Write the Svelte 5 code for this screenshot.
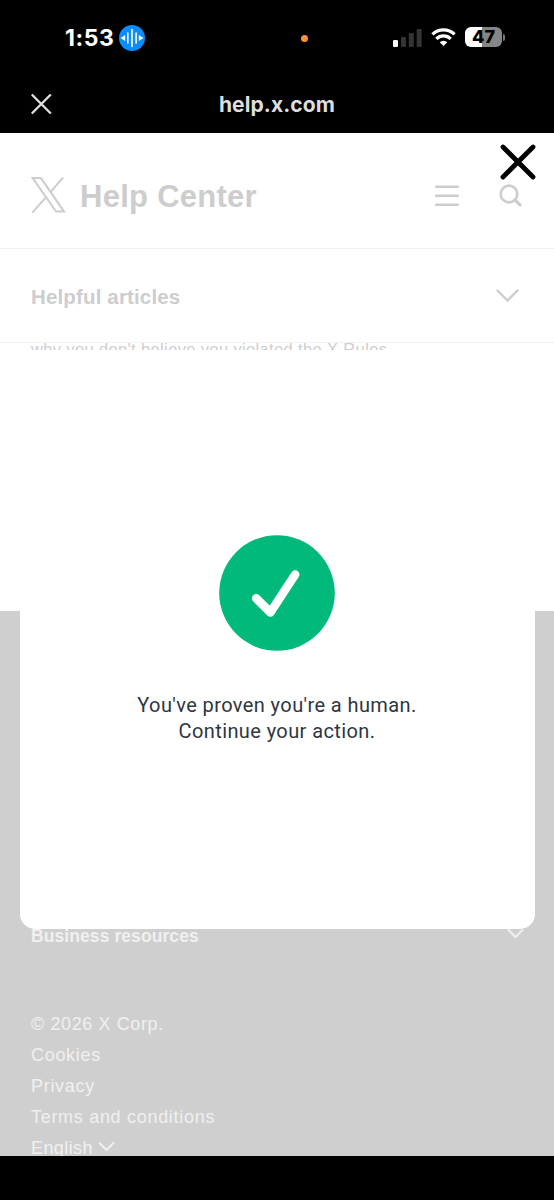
<script>
  const links = ['© 2026 X Corp.', 'Cookies', 'Privacy', 'Terms and conditions'];
</script>

<div class="phone">
  <div class="status">
    <span class="time">1:53</span>
    <svg class="voice" width="26" height="26" viewBox="0 0 26 26">
      <circle cx="13" cy="13" r="13" fill="#0a8cfb" />
      <path d="M1.5 13 6.2 10v6zM24.5 13 19.8 10v6z" fill="#fff" />
      <path d="M8.8 8v10M13 4.5v17M17.1 8v10" stroke="#fff" stroke-width="1.6" stroke-linecap="round" />
    </svg>
    <span class="dot"></span>
    <svg class="signal" width="29" height="18" viewBox="0 0 29 18">
      <rect x="0" y="11" width="5" height="7" rx="1.3" fill="#fff" />
      <rect x="8" y="8" width="5" height="10" rx="1.3" fill="#343434" />
      <rect x="15.8" y="4" width="5" height="14" rx="1.3" fill="#343434" />
      <rect x="23.7" y="0" width="5" height="18" rx="1.3" fill="#343434" />
    </svg>
    <svg class="wifi" width="25" height="18" viewBox="0 0 25 18">
      <g fill="none" stroke="#fff" stroke-width="3.2">
        <path d="M1.4 6.4a15.8 15.8 0 0 1 22.2 0" />
        <path d="M5.3 10.9a10.2 10.2 0 0 1 14.4 0" />
      </g>
      <path d="M12.5 18 8.7 14.2a5.4 5.4 0 0 1 7.6 0z" fill="#fff" />
    </svg>
    <span class="battery">47</span>
    <span class="cap"></span>
  </div>

  <div class="browser">
    <svg width="22" height="22" viewBox="0 0 22 22"><path d="M1.8 1.5l19 19M20.8 1.5l-19 19" stroke="#dedede" stroke-width="2.4" /></svg>
    <span class="host">help.x.com</span>
  </div>

  <main class="page">
    <header class="head">
      <svg class="logo" width="35" height="36" viewBox="0 0 35 36" fill="none" stroke="#cdcdcd">
        <path d="M1.7 1.1H10L33 34.6H25.1z" stroke-width="2" />
        <path d="M32.2.5 19.2 15.4M15.1 20.1 1.3 35.6" stroke-width="2" />
      </svg>
      <span class="title">Help Center</span>
      <svg class="menu" width="24" height="22" viewBox="0 0 24 22"><path d="M1.2 1.7h21.6M1.2 10.8h21.6M1.2 19.8h21.6" stroke="#cdcdcd" stroke-width="2.4" stroke-linecap="round" /></svg>
      <svg class="search" width="23" height="23" viewBox="0 0 23 23" fill="none" stroke="#cdcdcd"><circle cx="10" cy="10" r="8.3" stroke-width="2.7" /><path d="M16 16l5 4.9" stroke-width="3.2" stroke-linecap="round" /></svg>
    </header>
    <section class="articles">
      <span>Helpful articles</span>
      <svg width="23" height="14" viewBox="0 0 23 14"><path d="M1.5 1.5 11.5 11.5 21.5 1.5" fill="none" stroke="#cdcdcd" stroke-width="2.3" stroke-linecap="round" /></svg>
    </section>
    <p class="snippet"><span>why you don't believe you violated the X Rules</span></p>

    <footer class="foot">
      <div class="resources">
        <span>Business resources</span>
        <svg width="17" height="11" viewBox="0 0 17 11"><path d="M1 1.5 8.5 9 16 1.5" fill="none" stroke="#f0f0f0" stroke-width="2" /></svg>
      </div>
      <nav class="links">
        {#each links as l}<span>{l}</span>{/each}
        <span>English<svg class="lang" width="17" height="11" viewBox="0 0 17 11"><path d="M1 1.5 8.5 9 16 1.5" fill="none" stroke="#f0f0f0" stroke-width="2" /></svg></span>
      </nav>
    </footer>

    <div class="modal">
      <svg class="check" width="116" height="116" viewBox="0 0 116 116">
        <circle cx="58" cy="58" r="57.8" fill="#02b97c" />
        <path d="M37.2 63.3 51.4 77.4 76.2 39.5" fill="none" stroke="#fff" stroke-width="8.6" stroke-linecap="round" stroke-linejoin="round" />
      </svg>
      <p class="msg"><span>You've proven you're a human.</span><span>Continue your action.</span></p>
    </div>
    <svg class="close" width="36" height="36" viewBox="0 0 36 36"><path d="M3 3l30 30M33 3 3 33" stroke="#000" stroke-width="4.8" stroke-linecap="round" /></svg>
  </main>
</div>

<style>
  :global(body) { margin: 0; background: #000; }
  .phone {
    width: 554px; height: 1200px; background: #000; overflow: hidden;
    font-family: "Liberation Sans", Arial, sans-serif; white-space: nowrap;
  }
  svg { display: block; flex: none; }
  .status { height: 75px; display: flex; align-items: center; box-sizing: border-box; padding-left: 65px; }
  .time { width: 54px; font: 700 23px/26px Inter, sans-serif; color: #fff; letter-spacing: .6px; }
  .dot { width: 7px; height: 7px; border-radius: 50%; background: #ff902f; margin: 1px 0 0 156px; }
  .signal { margin-left: 85px; }
  .wifi { margin-left: 9px; margin-top: -1px; }
  .battery {
    margin-left: 9px; width: 37px; height: 20px; border-radius: 6px;
    background: linear-gradient(90deg, #fff 47%, #858585 47%);
    font: 800 18px/20px Inter, sans-serif; color: #000; text-align: center; margin-top: -1px;
  }
  .cap { width: 2px; height: 7px; margin-left: 1px; border-radius: 0 3px 3px 0; background: #777; margin-top: -1px; }
  .browser { height: 58px; display: grid; grid-template-columns: 1fr auto 1fr; align-items: center; padding-left: 30px; padding-right: 30px; }
  .host { font: 700 21px/26px Inter, sans-serif; color: #dedede; letter-spacing: .1px; margin-top: 2px; }
  .page { position: relative; height: 1023px; overflow: hidden; background: #fff; display: flex; flex-direction: column; }
  .head { height: 115px; display: flex; align-items: center; padding: 0 31px; border-bottom: 1px solid #f1f1f1; flex: none; }
  .logo { margin-top: 9px; }
  .title { font-weight: 700; font-size: 31px; letter-spacing: .27px; color: #cdcdcd; margin: 12px 0 0 14px; }
  .menu { margin: 10px 40px 0 auto; }
  .search { margin: 10px 1px 0 0; }
  .articles { height: 93px; display: flex; align-items: center; justify-content: space-between; padding: 0 35px 0 31px; border-bottom: 1px solid #f1f1f1; font-weight: 700; font-size: 20.5px; letter-spacing: .15px; color: #cdcdcf; flex: none; }
  .articles span { margin-top: 2px; }
  .snippet { margin: 0; height: 7px; overflow: hidden; padding-left: 31px; color: #cdcdd0; font-size: 16.5px; line-height: 19px; flex: none; letter-spacing: .36px; }
  .snippet span { display: block; margin-top: -3px; }
  .foot { margin-top: auto; height: 545px; background: #cfcfcf; color: #f0f0f0; flex: none; display: flex; flex-direction: column; }
  .resources { margin-top: 316px; padding: 0 30px 0 31px; height: 20px; display: flex; align-items: center; justify-content: space-between; font-weight: 700; font-size: 17.5px; letter-spacing: .08px; }
  .resources svg { margin-top: -7px; }
  .resources span { margin-top: -1px; }
  .links { margin-top: 62px; padding-left: 31px; display: flex; flex-direction: column; font-size: 18px; line-height: 31px; letter-spacing: .7px; }
  .links span { display: flex; align-items: center; }
  .links span:last-child { letter-spacing: .4px; }
  .links span:first-child { letter-spacing: .6px; }
  .lang { margin: -4px 0 0 5px; }
  .modal { position: absolute; left: 19.5px; top: 217px; width: 515px; height: 579px; background: #fff; border-radius: 0 0 15px 15px; display: flex; flex-direction: column; align-items: center; }
  .check { margin-top: 184.5px; }
  .msg { margin: 41px 0 0; display: flex; flex-direction: column; align-items: center; font: 400 20px/26px Roboto, sans-serif; letter-spacing: .4px; color: #2e3641; }
  .close { position: absolute; left: 500px; top: 11px; }
</style>
